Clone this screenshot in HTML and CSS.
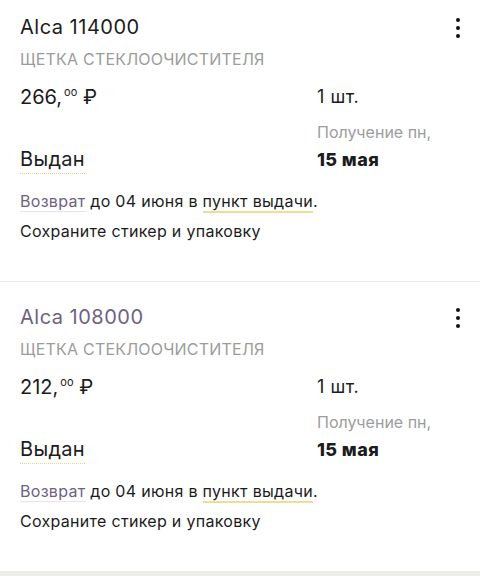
FILE: index.html
```html
<!DOCTYPE html>
<html lang="ru">
<head>
    <meta charset="UTF-8">
    <meta name="viewport" content="width=device-width, initial-scale=1.0">
    <title>Заказы</title>
    <link rel="stylesheet" href="styles.css">
</head>
<body>
    <div class="list">
        <div class="item">
            <div class="item-head">
                <div class="item-title">Alca 114000</div>
                <div class="kebab"><span></span><span></span><span></span></div>
            </div>
            <div class="item-name">ЩЕТКА СТЕКЛООЧИСТИТЕЛЯ</div>
            <div class="item-grid">
                <div class="price">266,<sup>oo</sup> ₽</div>
                <div class="qty">1 шт.</div>
                <div class="status"><span class="dotted">Выдан</span></div>
                <div class="delivery">
                    <div class="delivery-label">Получение пн,</div>
                    <div class="delivery-date">15 мая</div>
                </div>
            </div>
            <div class="note"><a class="link">Возврат</a> до 04 июня в <span class="point">пункт выдачи</span>.</div>
            <div class="note">Сохраните стикер и упаковку</div>
        </div>

        <div class="item">
            <div class="item-head">
                <div class="item-title visited">Alca 108000</div>
                <div class="kebab"><span></span><span></span><span></span></div>
            </div>
            <div class="item-name">ЩЕТКА СТЕКЛООЧИСТИТЕЛЯ</div>
            <div class="item-grid">
                <div class="price">212,<sup>oo</sup> ₽</div>
                <div class="qty">1 шт.</div>
                <div class="status"><span class="dotted">Выдан</span></div>
                <div class="delivery">
                    <div class="delivery-label">Получение пн,</div>
                    <div class="delivery-date">15 мая</div>
                </div>
            </div>
            <div class="note"><a class="link">Возврат</a> до 04 июня в <span class="point">пункт выдачи</span>.</div>
            <div class="note">Сохраните стикер и упаковку</div>
        </div>
    </div>
</body>
</html>
```

FILE: styles.css
```css
body {
    margin: 0;
    font-family: Inter, Roboto, "Liberation Sans", sans-serif;
    color: #1c1c1c;
    background-color: #efedea;
    overflow: hidden;
}

.list {
    margin-top: -8px;
}

.item {
    background-color: #fff;
    padding: 21px 20px 38px 20px;
    border-bottom: 1px solid #ececec;
}

.item-head {
    display: flex;
    justify-content: space-between;
    align-items: flex-start;
}

.item-title {
    font-size: 20px;
    line-height: 28px;
    letter-spacing: 0.5px;
}

.item-title.visited {
    color: #6e6282;
}

.kebab {
    display: flex;
    flex-direction: column;
    gap: 4px;
    margin-top: 5px;
    margin-right: 0;
}

.kebab span {
    width: 4px;
    height: 4px;
    border-radius: 50%;
    background-color: #111;
}

.item-name {
    margin-top: 6px;
    font-size: 16px;
    line-height: 24px;
    letter-spacing: 0.2px;
    color: #9c9c9c;
}

.item-grid {
    display: grid;
    grid-template-columns: 297px 1fr;
    margin-top: 12px;
}

.price {
    font-size: 20px;
    line-height: 28px;
}

.price sup {
    font-size: 11px;
    vertical-align: 8px;
    line-height: 0;
    margin-left: 2px;
}

.qty {
    font-size: 18px;
    line-height: 28px;
    letter-spacing: 0.5px;
}

.status {
    display: flex;
    align-items: flex-end;
    font-size: 20px;
    line-height: 28px;
    letter-spacing: 0.3px;
}

.dotted {
    border-bottom: 1px dotted #e9d57a;
}

.delivery {
    margin-top: 9px;
}

.delivery-label {
    font-size: 16px;
    line-height: 24px;
    color: #9c9c9c;
}

.delivery-date {
    margin-top: 2px;
    font-size: 18px;
    line-height: 28px;
    font-weight: 800;
    letter-spacing: 0.4px;
}

.note {
    font-size: 16px;
    line-height: 24px;
    letter-spacing: 0.3px;
    margin-top: 6px;
}

.item-grid + .note {
    margin-top: 15px;
}

.link {
    color: #6e6282;
    border-bottom: 1px solid #e6e4ea;
}

.point {
    border-bottom: 2px solid #f0dc94;
}
```
